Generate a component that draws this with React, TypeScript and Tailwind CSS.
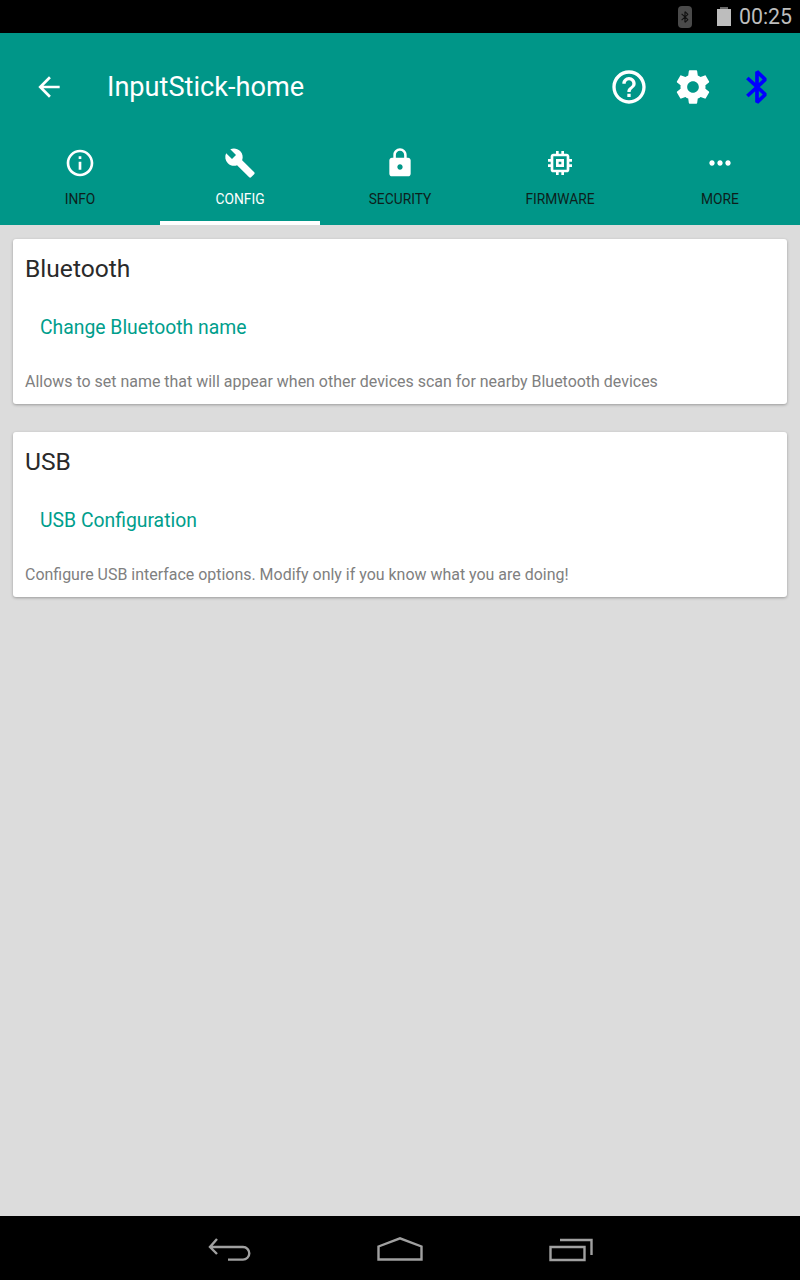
import React from "react";

const tabs = [
  { label: "INFO", icon: <InfoIcon /> },
  { label: "CONFIG", icon: <WrenchIcon />, active: true },
  { label: "SECURITY", icon: <LockIcon /> },
  { label: "FIRMWARE", icon: <ChipIcon /> },
  { label: "MORE", icon: <DotsIcon /> },
];

function InfoIcon() {
  return (
    <svg width="32" height="32" viewBox="0 0 24 24" fill="white">
      <path d="M11 7h2v2h-2zm0 4h2v6h-2zm1-9C6.48 2 2 6.48 2 12s4.48 10 10 10 10-4.48 10-10S17.52 2 12 2zm0 18c-4.41 0-8-3.59-8-8s3.59-8 8-8 8 3.59 8 8-3.59 8-8 8z" />
    </svg>
  );
}

function WrenchIcon() {
  return (
    <svg width="32" height="32" viewBox="0 0 24 24" fill="white">
      <path d="M22.7 19l-9.1-9.1c.9-2.3.4-5-1.5-6.9-2-2-5-2.4-7.4-1.3L9 6 6 9 1.6 4.7C.4 7.1.9 10.1 2.9 12.1c1.9 1.9 4.6 2.4 6.9 1.5l9.1 9.1c.4.4 1 .4 1.4 0l2.3-2.3c.5-.4.5-1.1.1-1.4z" />
    </svg>
  );
}

function LockIcon() {
  return (
    <svg width="32" height="32" viewBox="0 0 24 24" fill="white">
      <path d="M18 8h-1V6c0-2.76-2.24-5-5-5S7 3.24 7 6v2H6c-1.1 0-2 .9-2 2v10c0 1.1.9 2 2 2h12c1.1 0 2-.9 2-2V10c0-1.1-.9-2-2-2zm-6 9c-1.1 0-2-.9-2-2s.9-2 2-2 2 .9 2 2-.9 2-2 2zm3.1-9H8.9V6c0-1.71 1.39-3.1 3.1-3.1 1.71 0 3.1 1.39 3.1 3.1v2z" />
    </svg>
  );
}

function ChipIcon() {
  return (
    <svg width="32" height="32" viewBox="0 0 24 24" fill="white">
      <path d="M15 9H9v6h6V9zm-2 4h-2v-2h2v2zm8-2V9h-2V7c0-1.1-.9-2-2-2h-2V3h-2v2h-2V3H9v2H7c-1.1 0-2 .9-2 2v2H3v2h2v2H3v2h2v2c0 1.1.9 2 2 2h2v2h2v-2h2v2h2v-2h2c1.1 0 2-.9 2-2v-2h2v-2h-2v-2h2zm-4 6H7V7h10v10z" />
    </svg>
  );
}

function DotsIcon() {
  return (
    <svg width="32" height="32" viewBox="0 0 24 24" fill="white">
      <path d="M6 10c-1.1 0-2 .9-2 2s.9 2 2 2 2-.9 2-2-.9-2-2-2zm12 0c-1.1 0-2 .9-2 2s.9 2 2 2 2-.9 2-2-.9-2-2-2zm-6 0c-1.1 0-2 .9-2 2s.9 2 2 2 2-.9 2-2-.9-2-2-2z" />
    </svg>
  );
}

function BluetoothGlyph({ color, width, size }: { color: string; width: number; size: number }) {
  return (
    <svg width={size} height={size} viewBox="0 0 24 24" fill="none" stroke={color} strokeWidth={width} strokeLinejoin="bevel">
      <path d="M6.200 6.600 17 16.500 12 21.200V2.800L17 7.500 6.200 17.400" />
    </svg>
  );
}

function Card(props: { title: string; action: string; text: string }) {
  return (
    <div className="h-[165px] rounded-[3px] bg-white px-3 shadow-[0_1px_3px_rgba(0,0,0,0.3)]">
      <div className="pt-[14px] text-[24.6px] leading-[32px] text-[#2a2a2a]">{props.title}</div>
      <div className="mt-[29px] pl-[15px] text-[19.350px] leading-[28px] text-[#009e8c]">{props.action}</div>
      <div className="mt-[29px] text-[15.960px] leading-[22px] text-[#808080]">{props.text}</div>
    </div>
  );
}

export default function App() {
  return (
    <div className="flex h-[1280px] w-[800px] flex-col overflow-hidden bg-[#dcdcdc] font-['Roboto',sans-serif]">
      <div className="flex h-[33px] items-center justify-end bg-black pr-2">
        <div className="mr-[25px] flex h-[22px] w-[14px] items-center justify-center rounded-[4px] bg-[#4a4a4a]">
          <BluetoothGlyph color="#111" width={2} size={18} />
        </div>
        <div className="relative mr-[8px] h-[17px] w-[14px] translate-y-[1px] bg-[#bdbdbd]">
          <div className="absolute left-[3px] top-[-2px] h-[2px] w-[8px] bg-[#6b6b6b]" />
        </div>
        <div className="text-[21.300px] leading-none text-[#bdbdbd]">00:25</div>
      </div>

      <div className="flex h-[107px] items-center bg-[#009688] pl-[33px] pr-[23px]">
        <svg width="32" height="32" viewBox="0 0 24 24" fill="white">
          <path d="M20 11H7.830l5.590-5.590L12 4l-8 8 8 8 1.410-1.410L7.830 13H20v-2z" />
        </svg>
        <div className="ml-[42px] flex-grow pt-[3px] text-[27.150px] leading-none text-white">InputStick-home</div>
        <div className="flex items-center gap-[24px]">
          <svg width="40" height="40" viewBox="0 0 24 24" fill="white">
            <path d="M11 18h2v-2h-2v2zm1-16C6.480 2 2 6.480 2 12s4.480 10 10 10 10-4.480 10-10S17.520 2 12 2zm0 18c-4.410 0-8-3.590-8-8s3.590-8 8-8 8 3.590 8 8-3.590 8-8 8zm0-14c-2.210 0-4 1.790-4 4h2c0-1.100.9-2 2-2s2 .9 2 2c0 2-3 1.750-3 5h2c0-2.250 3-2.500 3-5 0-2.210-1.790-4-4-4z" />
          </svg>
          <svg width="40" height="40" viewBox="0 0 24 24" fill="white">
            <path d="M19.430 12.980c.04-.32.07-.64.07-.98s-.03-.66-.07-.98l2.110-1.650c.19-.15.24-.42.12-.64l-2-3.460c-.12-.22-.39-.3-.61-.22l-2.490 1c-.52-.4-1.080-.73-1.690-.98l-.38-2.650C14.460 2.180 14.250 2 14 2h-4c-.25 0-.46.18-.49.42l-.38 2.650c-.61.25-1.170.59-1.690.98l-2.490-1c-.23-.09-.49 0-.61.22l-2 3.460c-.13.22-.07.49.12.64l2.110 1.650c-.04.32-.07.65-.07.98s.03.66.07.98l-2.110 1.650c-.19.15-.24.42-.12.64l2 3.460c.12.22.39.3.61.22l2.490-1c.52.4 1.080.73 1.690.98l.38 2.650c.03.24.24.42.49.42h4c.25 0 .46-.18.49-.42l.38-2.650c.61-.25 1.170-.59 1.690-.98l2.490 1c.23.09.49 0 .61-.22l2-3.460c.12-.22.07-.49-.12-.64l-2.110-1.650zM12 15.500c-1.930 0-3.500-1.570-3.500-3.500s1.570-3.500 3.500-3.500 3.500 1.570 3.500 3.500-1.570 3.500-3.500 3.500z" />
          </svg>
          <BluetoothGlyph color="#0000ff" width={2.2} size={40} />
        </div>
      </div>

      <div className="flex h-[85px] bg-[#009688]">
        {tabs.map((tab) => (
          <div
            key={tab.label}
            className={
              tab.active
                ? "flex w-[160px] flex-col items-center border-b-[4px] border-white pt-[7px] text-white"
                : "flex w-[160px] flex-col items-center pt-[7px] text-[#0d1f1c]"
            }
          >
            {tab.icon}
            <div className="mt-[12px] text-[13.800px] leading-[16px]">{tab.label}</div>
          </div>
        ))}
      </div>

      <div className="flex flex-grow flex-col gap-[28px] px-[13px] pt-[14px]">
        <Card
          title="Bluetooth"
          action="Change Bluetooth name"
          text="Allows to set name that will appear when other devices scan for nearby Bluetooth devices"
        />
        <Card
          title="USB"
          action="USB Configuration"
          text="Configure USB interface options. Modify only if you know what you are doing!"
        />
      </div>

      <div className="flex h-[64px] items-center justify-center bg-black pt-[4px]">
        <div className="flex items-center gap-[125px]">
          <svg width="44" height="24" viewBox="0 0 44 24" fill="none" stroke="#a0a0a0" strokeWidth="2.400">
            <path d="M9 1 2 9l7 7M2 9h33a6.300 6.300 0 0 1 0 12.600H20" />
          </svg>
          <svg className="mb-[2px]" width="46" height="24" viewBox="0 0 46 24" fill="none" stroke="#a0a0a0" strokeWidth="2.400">
            <path d="M1.500 9.500 23 1.300l21.500 8.200v13h-43z" />
          </svg>
          <svg className="ml-px" width="44" height="24" viewBox="0 0 44 24" fill="none" stroke="#a0a0a0" strokeWidth="2.400">
            <path d="M11 2h31.500v15M1.500 9h34v13h-34z" />
          </svg>
        </div>
      </div>
    </div>
  );
}
